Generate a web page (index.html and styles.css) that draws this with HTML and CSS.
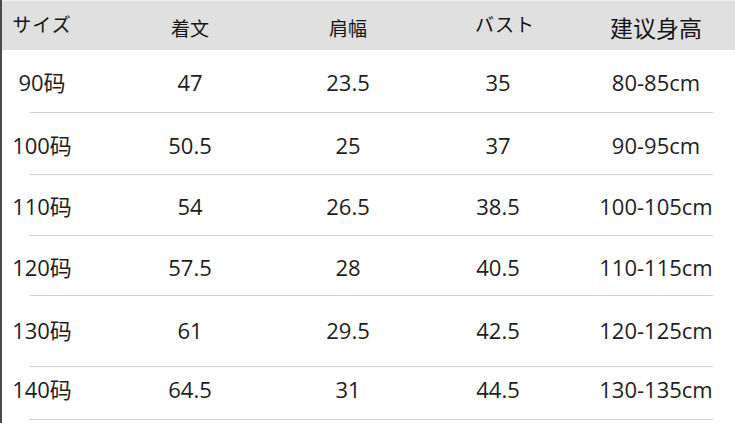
FILE: index.html
```html
<!DOCTYPE html>
<html lang="zh">
<head>
<meta charset="utf-8">
<link rel="stylesheet" href="styles.css">
</head>
<body>
<div class="sheet">
  <div class="row head">
    <div class="cell kana">サイズ</div>
    <div class="cell">着文</div>
    <div class="cell">肩幅</div>
    <div class="cell kana bust">バスト</div>
    <div class="cell big">建议身高</div>
  </div>
  <div class="row r1">
    <div class="cell">90码</div><div class="cell">47</div><div class="cell">23.5</div><div class="cell">35</div><div class="cell">80-85cm</div>
  </div>
  <div class="rule"></div>
  <div class="row r2">
    <div class="cell">100码</div><div class="cell">50.5</div><div class="cell">25</div><div class="cell">37</div><div class="cell">90-95cm</div>
  </div>
  <div class="rule"></div>
  <div class="row r3">
    <div class="cell">110码</div><div class="cell">54</div><div class="cell">26.5</div><div class="cell">38.5</div><div class="cell">100-105cm</div>
  </div>
  <div class="rule"></div>
  <div class="row r4">
    <div class="cell">120码</div><div class="cell">57.5</div><div class="cell">28</div><div class="cell">40.5</div><div class="cell">110-115cm</div>
  </div>
  <div class="rule"></div>
  <div class="row r5">
    <div class="cell">130码</div><div class="cell">61</div><div class="cell">29.5</div><div class="cell">42.5</div><div class="cell">120-125cm</div>
  </div>
  <div class="rule"></div>
  <div class="row r6">
    <div class="cell">140码</div><div class="cell">64.5</div><div class="cell">31</div><div class="cell">44.5</div><div class="cell">130-135cm</div>
  </div>
  <div class="rule"></div>
</div>
</body>
</html>
```

FILE: styles.css
```css
html, body {
  margin: 0;
  padding: 0;
  background: #ffffff;
}
.sheet {
  width: 735px;
  height: 423px;
  box-sizing: border-box;
  border-left: 2px solid #4a4a4a;
  font-family: "Open Sans", "Noto Sans CJK SC", sans-serif;
  color: #1e1e1e;
  overflow: hidden;
}
.row {
  display: grid;
  grid-template-columns: 80px 216px 100px 200px 116px;
  align-items: center;
  font-size: 22px;
  line-height: 1;
  white-space: nowrap;
  box-sizing: border-box;
}
.cell {
  text-align: center;
}
.head {
  height: 50px;
  border-top: 1px solid #f0f0f0;
  background: #e0e0e0;
  font-family: "Noto Sans CJK SC", sans-serif;
  font-size: 19px;
  color: #151515;
  padding-top: 4px;
}
.head .kana {
  font-family: "Noto Sans CJK JP", sans-serif;
  letter-spacing: 1px;
  position: relative;
  top: -4px;
}
.head .bust {
  padding-left: 14px;
}
.head .big {
  font-size: 23px;
}
.rule {
  height: 1px;
  margin: 0 22px 0 28px;
  background: #cfcfcf;
}
.r1 { height: 62px; padding-top: 2px; }
.r2 { height: 61px; padding-top: 2px; }
.r3 { height: 60px; padding-top: 2px; }
.r4 { height: 59px; padding-top: 2px; }
.r5 { height: 70px; padding-bottom: 2px; }
.r6 { height: 52px; padding-bottom: 8px; }
```
